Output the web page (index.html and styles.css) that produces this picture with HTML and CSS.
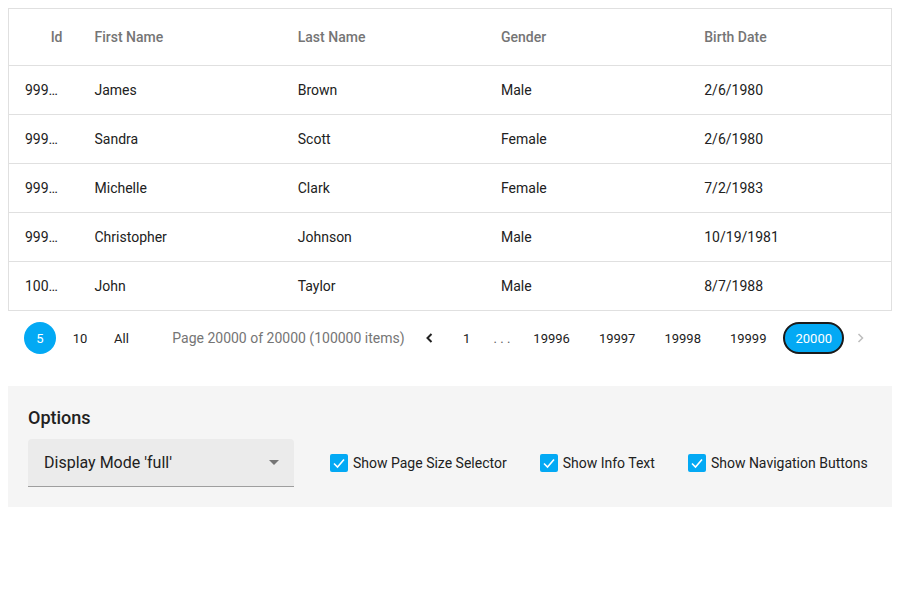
FILE: index.html
```html
<!DOCTYPE html>
<html>
<head>
<meta charset="utf-8">
<link rel="stylesheet" href="styles.css">
</head>
<body>
<div class="grid">
  <table class="table">
    <colgroup><col class="col-id"><col><col><col><col></colgroup>
    <thead>
      <tr><th class="num">Id</th><th>First Name</th><th>Last Name</th><th>Gender</th><th>Birth Date</th></tr>
    </thead>
    <tbody>
      <tr><td class="num">99996</td><td>James</td><td>Brown</td><td>Male</td><td>2/6/1980</td></tr>
      <tr><td class="num">99997</td><td>Sandra</td><td>Scott</td><td>Female</td><td>2/6/1980</td></tr>
      <tr><td class="num">99998</td><td>Michelle</td><td>Clark</td><td>Female</td><td>7/2/1983</td></tr>
      <tr><td class="num">99999</td><td>Christopher</td><td>Johnson</td><td>Male</td><td>10/19/1981</td></tr>
      <tr><td class="num">100000</td><td>John</td><td>Taylor</td><td>Male</td><td>8/7/1988</td></tr>
    </tbody>
  </table>
  <div class="pager">
    <div class="sizes">
      <span class="size selected">5</span>
      <span class="size">10</span>
      <span class="size">All</span>
    </div>
    <div class="pages">
      <span class="info">Page 20000 of 20000 (100000 items)</span>
      <span class="nav"><svg width="12" height="12" viewBox="0 0 12 12"><polyline points="7.5,2 3.5,6 7.5,10" fill="none" stroke="#212121" stroke-width="2"/></svg></span>
      <span class="page">1</span>
      <span class="dots">. . .</span>
      <span class="page">19996</span>
      <span class="page">19997</span>
      <span class="page">19998</span>
      <span class="page">19999</span>
      <span class="page selected">20000</span>
      <span class="nav last"><svg width="12" height="12" viewBox="0 0 12 12"><polyline points="4.5,2 8.5,6 4.5,10" fill="none" stroke="#bdbdbd" stroke-width="1.5"/></svg></span>
    </div>
  </div>
</div>
<div class="options">
  <div class="caption">Options</div>
  <div class="option-row">
    <div class="select">
      <span class="select-text">Display Mode 'full'</span>
      <span class="caret"></span>
    </div>
    <label class="check"><span class="box"><svg width="18" height="18" viewBox="0 0 18 18"><polyline points="4,9.5 7.5,13 14,5.5" fill="none" stroke="#fff" stroke-width="1.6"/></svg></span>Show Page Size Selector</label>
    <label class="check"><span class="box"><svg width="18" height="18" viewBox="0 0 18 18"><polyline points="4,9.5 7.5,13 14,5.5" fill="none" stroke="#fff" stroke-width="1.6"/></svg></span>Show Info Text</label>
    <label class="check"><span class="box"><svg width="18" height="18" viewBox="0 0 18 18"><polyline points="4,9.5 7.5,13 14,5.5" fill="none" stroke="#fff" stroke-width="1.6"/></svg></span>Show Navigation Buttons</label>
  </div>
</div>
</body>
</html>
```
FILE: styles.css
```css
body {
  margin: 8px;
  font-family: Roboto, "Liberation Sans", sans-serif;
  color: #212121;
  background: #fff;
}
.table {
  width: 100%;
  border-collapse: collapse;
  table-layout: fixed;
  border: 1px solid #e0e0e0;
  font-size: 14px;
}
.col-id { width: 70px; }
th, td {
  text-align: left;
  padding: 0 16px;
  white-space: nowrap;
  overflow: hidden;
  text-overflow: ellipsis;
  border-bottom: 1px solid #e0e0e0;
}
th {
  height: 56px;
  font-weight: 500;
  color: #757575;
}
td {
  height: 48px;
  color: #212121;
}
.num { text-align: right; }
.pager {
  display: flex;
  justify-content: space-between;
  align-items: center;
  padding: 11px 16px 0;
  font-size: 13px;
}
.sizes, .pages {
  display: flex;
  align-items: center;
}
.sizes { gap: 8px; }
.size {
  min-width: 32px;
  height: 32px;
  box-sizing: border-box;
  padding: 0 8px;
  display: flex;
  align-items: center;
  justify-content: center;
  border-radius: 16px;
}
.size.selected {
  background: #03a9f4;
  color: #fff;
  padding: 0;
}
.size:last-child { padding-left: 10px; }
.info {
  font-size: 14px;
  color: #757575;
  margin-right: 9px;
}
.nav {
  width: 32px;
  height: 32px;
  display: flex;
  align-items: center;
  justify-content: center;
}
.page {
  min-width: 32px;
  height: 32px;
  box-sizing: border-box;
  padding: 0 10px;
  border: 2px solid transparent;
  border-radius: 16px;
  display: flex;
  align-items: center;
  justify-content: center;
  margin-left: 5px;
}
.page.selected {
  background: #03a9f4;
  border-color: #1a1a1a;
  color: #fff;
}
.dots {
  margin-left: 5px;
  padding: 0 6px;
  color: #616161;
}
.options {
  margin-top: 32px;
  background: #f5f5f5;
  padding: 20px;
}
.caption {
  font-size: 18px;
  font-weight: 500;
  line-height: 24px;
  margin-bottom: 9px;
  color: #212121;
}
.option-row {
  display: flex;
  align-items: center;
}
.select {
  flex: none;
  width: 266px;
  height: 48px;
  box-sizing: border-box;
  background: #ebebeb;
  border-radius: 4px 4px 0 0;
  border-bottom: 1px solid #9e9e9e;
  display: flex;
  align-items: center;
  padding: 0 15px 0 16px;
  margin-right: 36px;
}
.select-text {
  flex: 1;
  font-size: 16px;
  color: #212121;
}
.caret {
  width: 0;
  height: 0;
  border-left: 5px solid transparent;
  border-right: 5px solid transparent;
  border-top: 5px solid #757575;
}
.check {
  flex: none;
  white-space: nowrap;
  display: flex;
  align-items: center;
  font-size: 14px;
  color: #212121;
  margin-right: 33px;
}
.check:last-child { margin-right: 0; }
.box {
  width: 18px;
  height: 18px;
  border-radius: 2px;
  background: #03a9f4;
  margin-right: 5px;
  display: flex;
}
```
